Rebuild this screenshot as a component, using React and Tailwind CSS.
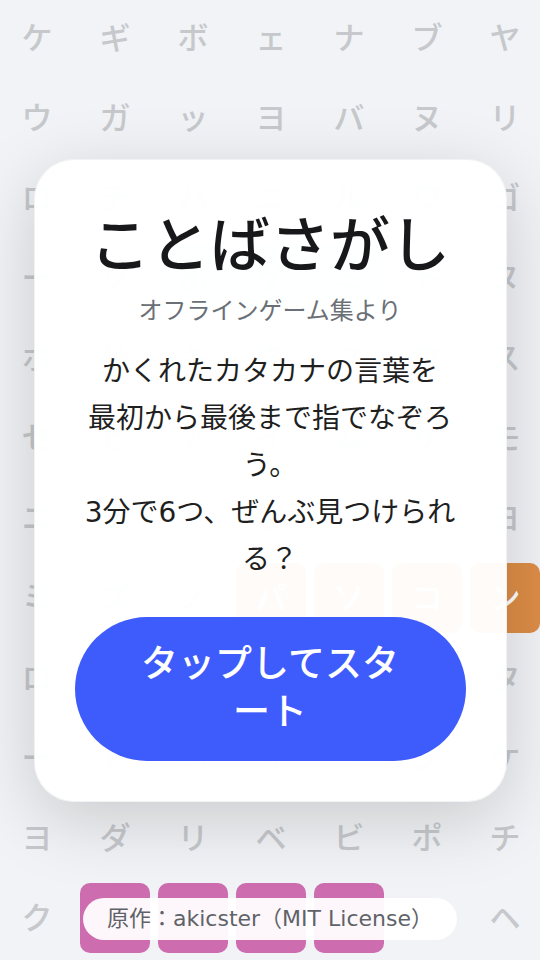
import React from 'react';

const rows = [
    'ケギボェナブヤ',
    'ウガッヨバヌリ',
    'ロヂハニルワゴ',
    'ーソホゲミトヌ',
    'ホサキネユマス',
    'セヒアイムケモ',
    'ニフシツヲペヨ',
    'ミズノパソコン',
    'ロゼカメテレタ',
    'ードヘオプジケ',
    'ヨダリベビポチ',
    'ク     ヘ',
];

// which cells are painted (row-col)
const marks = {
    '3-2': 'pale', '3-3': 'pale', '3-4': 'pale',
    '7-3': 'orange', '7-4': 'orange', '7-5': 'orange', '7-6': 'orange',
    '11-1': 'pink', '11-2': 'pink', '11-3': 'pink', '11-4': 'pink',
};

const cellClass = (mark) => {
    if (mark === 'orange') return 'bg-[#dd8d47] text-white';
    if (mark === 'pink') return 'bg-[#cd6caf] text-white';
    if (mark === 'pale') return 'bg-[#dde5e6] text-[#c6c8cc]';
    return 'text-[#c6c8cc]';
};

const App = () => {
    return (
        <div className="relative h-[960px] w-[540px] overflow-hidden bg-[#f1f3f6] font-['DejaVu_Sans','Noto_Sans_CJK_JP',sans-serif]">
            {/* Letter board */}
            <div className="grid grid-cols-7 gap-x-2 gap-y-[10px] pl-[2px] pt-[3px]">
                {rows.map((row, r) =>
                    row.split('').map((ch, c) => (
                        <div
                            key={`${r}-${c}`}
                            className={`flex h-[70px] w-[70px] items-center justify-center rounded-[10px] text-[31px] font-medium ${cellClass(marks[`${r}-${c}`])}`}
                        >
                            {ch.trim()}
                        </div>
                    ))
                )}
            </div>

            {/* Start dialog */}
            <div className="absolute inset-0 flex items-center justify-center">
                <div className="w-[473px] rounded-[40px] border border-black/5 bg-white/[0.97] px-10 pt-[50px] pb-10 text-center shadow-[0_18px_70px_rgba(0,0,0,0.17)]">
                    <h1 className="text-[60px] font-medium leading-[72px] text-[#18181b]">ことばさがし</h1>
                    <p className="mt-3 text-[24px] leading-[34px] text-[#6b6f76]">オフラインゲーム集より</p>
                    <p className="mt-5 text-[28px] leading-[47px] text-[#1f1f1f]">
                        かくれたカタカナの言葉を<br />
                        最初から最後まで指でなぞろ<br />
                        う。<br />
                        3分で6つ、ぜんぶ見つけられ<br />
                        る？
                    </p>
                    <button className="mt-[34px] w-full rounded-full bg-[#3e5bfc] py-6 text-[37px] font-medium leading-[48px] text-white">
                        タップしてスタ<br />ート
                    </button>
                </div>
            </div>

            {/* Credit */}
            <div className="absolute bottom-5 left-1/2 -translate-x-1/2 whitespace-nowrap rounded-full bg-white/95 px-6 py-[4px] text-[22px] leading-[34px] text-[#5f6368]">
                原作：akicster（MIT License）
            </div>
        </div>
    );
};

export default App;
